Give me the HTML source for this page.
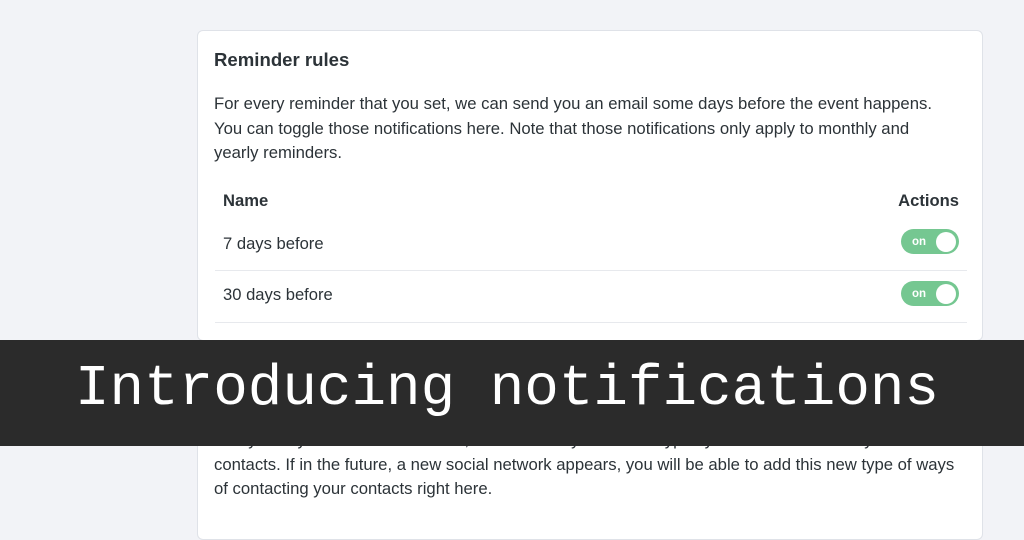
<!DOCTYPE html>
<html><head><style>
body{margin:0;width:1024px;height:512px;background:#f2f3f7;position:relative;overflow:hidden;font-family:"Liberation Sans",sans-serif;color:#2c3338}
.card{position:absolute;left:197px;width:786px;background:#fff;border:1px solid #dfe2e8;border-radius:6px;box-sizing:border-box}
h3{position:absolute;left:16px;top:18px;margin:0;font-size:18.6px;font-weight:bold;color:#2c3338}
p{position:absolute;left:16px;margin:0;font-size:16.7px;line-height:24.5px;width:730px;color:#2c3338}
.row{position:absolute;left:17px;width:752px;height:51px;border-bottom:1px solid #e7e9ed;font-size:16.6px}
.row span{position:absolute;left:8px;top:14px}
.tg{position:absolute;right:8px;top:10px;width:58px;height:25px;border-radius:13px;background:#75c791}
.tg b{position:absolute;left:11px;top:6.5px;font-size:11.5px;color:#fff}
.tg i{position:absolute;right:3px;top:2.5px;width:20px;height:20px;border-radius:50%;background:#fff}
.banner{position:absolute;left:0;top:340px;width:1024px;height:106px;background:#2b2b2b;color:#fff;font-family:"Liberation Mono",monospace;font-size:57.6px;line-height:100px;text-align:center;padding-right:10px;box-sizing:border-box}
</style></head><body>
<div class="card" style="top:30px;height:311px">
<h3>Reminder rules</h3>
<p style="top:61px">For every reminder that you set, we can send you an email some days before the event happens. You can toggle those notifications here. Note that those notifications only apply to monthly and yearly reminders.</p>
<div class="row" style="top:148px;height:40px;border:none"><span style="font-weight:bold;top:12px">Name</span><span style="left:auto;right:8px;font-weight:bold;top:12px">Actions</span></div>
<div class="row" style="top:188px"><span style="top:15px">7 days before</span><div class="tg"><b>on</b><i></i></div></div>
<div class="row" style="top:240px"><span style="top:14px">30 days before</span><div class="tg"><b>on</b><i></i></div></div>
</div>
<div class="card" style="top:400px;height:140px">
<p style="top:27px;width:752px">Every time you add a contact field, we will show you a list of types you can use to reach your contacts. If in the future, a new social network appears, you will be able to add this new type of ways of contacting your contacts right here.</p>
</div>
<div class="banner">Introducing notifications</div>
</body></html>
